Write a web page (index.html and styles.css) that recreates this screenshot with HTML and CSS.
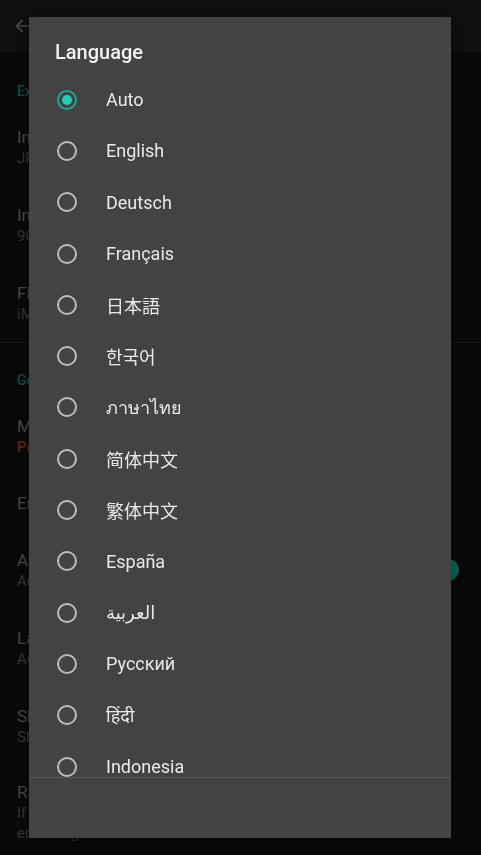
FILE: index.html
```html
<!DOCTYPE html>
<html lang="en">
<head>
  <meta charset="UTF-8" />
  <meta name="viewport" content="width=device-width, initial-scale=1.0"/>
  <title>Settings - Language</title>
  <link rel="stylesheet" href="styles.css">
</head>
<body>
  <div class="screen">
    <header class="topbar">
      <svg class="back" width="20" height="20" viewBox="0 0 24 24">
        <path d="M20 11H7.8l5.6-5.6L12 4l-8 8 8 8 1.4-1.4L7.8 13H20z" fill="#4a4a4a"/>
      </svg>
      <span class="topbar-title">Settings</span>
    </header>

    <section class="group">
      <div class="group-title">Export</div>
      <div class="pref"><div class="pref-title">Image format</div><div class="pref-sub">JPEG</div></div>
      <div class="pref"><div class="pref-title">Image quality</div><div class="pref-sub">90%</div></div>
      <div class="pref"><div class="pref-title">File name</div><div class="pref-sub">iMG_date</div></div>
    </section>

    <section class="group">
      <div class="group-title">General</div>
      <div class="pref"><div class="pref-title">Membership</div><div class="pref-sub pro">Pro</div></div>
      <div class="pref single"><div class="pref-title">Error report</div></div>
      <div class="pref"><div class="pref-title">Auto save</div><div class="pref-sub">Auto save edits</div><span class="switch"></span></div>
      <div class="pref"><div class="pref-title">Language</div><div class="pref-sub">Auto</div></div>
      <div class="pref"><div class="pref-title">Share</div><div class="pref-sub">Share this app</div></div>
      <div class="pref multi"><div class="pref-title">Rate</div><div class="pref-sub">If you like it, please rate</div><div class="pref-sub">encourage us</div></div>
    </section>
  </div>

  <div class="scrim">
    <div class="dialog">
      <h2 class="dialog-title">Language</h2>
      <div class="options">
        <label class="option checked"><span class="radio"></span><span class="label">Auto</span></label>
        <label class="option"><span class="radio"></span><span class="label">English</span></label>
        <label class="option"><span class="radio"></span><span class="label">Deutsch</span></label>
        <label class="option"><span class="radio"></span><span class="label">Français</span></label>
        <label class="option"><span class="radio"></span><span class="label jp">日本語</span></label>
        <label class="option"><span class="radio"></span><span class="label kr">한국어</span></label>
        <label class="option"><span class="radio"></span><span class="label">ภาษาไทย</span></label>
        <label class="option"><span class="radio"></span><span class="label sc">简体中文</span></label>
        <label class="option"><span class="radio"></span><span class="label sc">繁体中文</span></label>
        <label class="option"><span class="radio"></span><span class="label">España</span></label>
        <label class="option"><span class="radio"></span><span class="label">العربية</span></label>
        <label class="option"><span class="radio"></span><span class="label">Русский</span></label>
        <label class="option"><span class="radio"></span><span class="label">हिंदी</span></label>
        <label class="option"><span class="radio"></span><span class="label">Indonesia</span></label>
      </div>
      <div class="dialog-footer"></div>
    </div>
  </div>
</body>
</html>
```

FILE: styles.css
```css
body {
  margin: 0;
  background: #0a0a0a;
  font-family: Roboto, "Noto Sans", sans-serif;
  width: 481px;
  height: 855px;
  overflow: hidden;
}

.screen {
  color: #555;
}

.topbar {
  height: 52px;
  background: #101010;
  display: flex;
  align-items: center;
  gap: 24px;
  padding-left: 12px;
  border-bottom: 1px solid #151515;
  box-sizing: border-box;
}

.topbar-title {
  font-size: 20px;
  color: #3c3c3c;
}

.group {
  padding-left: 17px;
  border-bottom: 1px solid #1a1a1a;
}

.group:last-child {
  border-bottom: none;
}

.group-title {
  color: #0d5650;
  font-size: 14px;
  font-weight: 500;
  padding-top: 31px;
  height: 25px;
}

.group:last-child .group-title {
  padding-top: 29px;
}

.pref {
  position: relative;
  height: 78px;
  display: flex;
  flex-direction: column;
  justify-content: center;
}

.pref.single {
  height: 56px;
}

.pref.multi {
  justify-content: flex-start;
  padding-top: 16px;
  box-sizing: border-box;
}

.pref-title {
  font-size: 17px;
  color: #505050;
  line-height: 22px;
}

.pref-sub {
  font-size: 15px;
  color: #3a3a3a;
  line-height: 20px;
}

.pref-sub.pro {
  color: #652818;
  font-weight: 700;
}

.switch {
  position: absolute;
  right: 22px;
  top: 28px;
  width: 22px;
  height: 22px;
  border-radius: 50%;
  background: #0b6b60;
}

.scrim {
  position: fixed;
  inset: 0;
}

.dialog {
  position: absolute;
  left: 29px;
  top: 17px;
  width: 422px;
  height: 821px;
  background: #434343;
  box-shadow: 0 6px 24px rgba(0,0,0,0.5);
  display: flex;
  flex-direction: column;
}

.dialog-title {
  margin: 0;
  padding: 23px 26px 10px;
  font-size: 20px;
  font-weight: 500;
  line-height: 24px;
  color: #f2f2f2;
}

.options {
  height: 703px;
  overflow: hidden;
  border-bottom: 1px solid #575757;
}

.option {
  height: 51.3px;
  display: flex;
  align-items: center;
  padding-left: 28px;
  gap: 29px;
}

.radio {
  width: 20px;
  height: 20px;
  box-sizing: border-box;
  border: 2px solid #bdbdbd;
  border-radius: 50%;
  flex: none;
  display: flex;
  align-items: center;
  justify-content: center;
}

.option.checked .radio {
  border-color: #1fa696;
}

.option.checked .radio::after {
  content: "";
  width: 10px;
  height: 10px;
  border-radius: 50%;
  background: #22cdbb;
}

.label {
  font-size: 18px;
  color: #e8e8e8;
  font-family: Roboto, "Noto Sans", "DejaVu Sans", sans-serif;
}

.label.jp {
  font-family: "Noto Sans CJK JP", sans-serif;
}

.label.kr {
  font-family: "Noto Sans CJK KR", sans-serif;
}

.label.sc {
  font-family: "Noto Sans CJK SC", sans-serif;
}

.dialog-footer {
  flex: 1;
}
```
